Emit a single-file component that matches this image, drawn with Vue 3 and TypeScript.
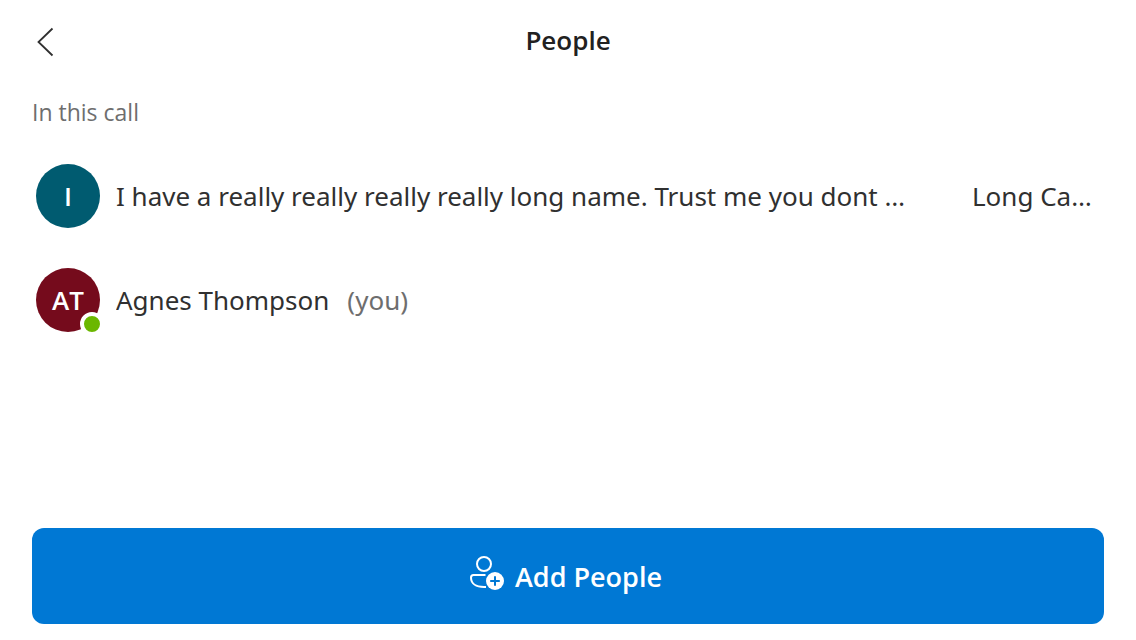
<script setup lang="ts">
interface Participant {
  initials: string
  name: string
  tone: string
  you?: boolean
  status?: string
  online?: boolean
}

const people: Participant[] = [
  { initials: 'I', name: 'I have a really really really really long name. Trust me you dont want to know it', tone: 'teal', status: 'Long Calling State' },
  { initials: 'AT', name: 'Agnes Thompson', tone: 'wine', you: true, online: true },
]
</script>

<template>
  <main class="pane">
    <header class="top">
      <button class="back" type="button" aria-label="Back">
        <svg width="18" height="30" viewBox="0 0 18 30" fill="none" stroke="#303030" stroke-width="1.8">
          <path d="M16.500 1.500 2.500 15 16.500 28.500" />
        </svg>
      </button>
      <h1>People</h1>
    </header>
    <h2>In this call</h2>
    <ul class="list">
      <li v-for="p in people" :key="p.name" class="row">
        <span class="avatar" :class="p.tone">{{ p.initials }}<i v-if="p.online" class="presence"></i></span>
        <span class="name">{{ p.name }}</span>
        <span v-if="p.you" class="you">(you)</span>
        <span v-if="p.status" class="status">{{ p.status }}</span>
      </li>
    </ul>
    <button class="add" type="button">
      <svg width="36" height="42" viewBox="0 0 36 42" fill="none" stroke="#fff" stroke-width="2">
        <circle cx="15" cy="9" r="7" />
        <path d="M16.500 20H4.500A2.500 2.500 0 0 0 2 22.500C2 28.500 7 32 15 32H17" />
        <circle cx="26" cy="26" r="9" fill="#fff" stroke="none" />
        <path d="M26 21.200v9.600M21.200 26h9.600" stroke="#0078d4" />
      </svg>
      <span>Add People</span>
    </button>
  </main>
</template>

<style>
body { background: #fff; }
</style>

<style scoped>
.pane {
  box-sizing: border-box;
  min-height: 100vh;
  padding: 16px 32px;
  display: flex;
  flex-direction: column;
  font-family: "Open Sans", "Noto Sans", sans-serif;
  color: #303030;
}
button { border: 0; padding: 0; font: inherit; cursor: pointer; }
.top {
  display: grid;
  grid-template-columns: 48px 1fr 48px;
  align-items: center;
  height: 48px;
}
.back {
  background: none;
  height: 48px;
  padding: 4px 0 0 4px;
  display: flex;
  align-items: center;
}
h1 { margin: 0; font-size: 26px; font-weight: 600; text-align: center; color: #212121; }
h2 { margin: 32px 0 0; font-size: 23px; line-height: 32px; font-weight: 400; color: #6e6e6e; }
.list { list-style: none; margin: 16px 0 0; padding: 0; }
.row {
  display: flex;
  align-items: center;
  height: 104px;
  padding: 0 8px 0 4px;
  font-family: "Noto Sans", "Open Sans", sans-serif;
  font-size: 26px;
}
.avatar {
  position: relative;
  flex: none;
  width: 64px;
  height: 64px;
  margin-right: 16px;
  border-radius: 50%;
  display: grid;
  place-items: center;
  color: #fff;
  font-family: "Open Sans", "Noto Sans", sans-serif;
  font-weight: 600;
}
.teal { background: #005b70; }
.wine { background: #750b1c; }
.presence {
  position: absolute;
  right: -4px;
  bottom: -4px;
  width: 16px;
  height: 16px;
  border: 4px solid #fff;
  border-radius: 50%;
  background: #6bb700;
}
.name, .status { overflow: hidden; white-space: nowrap; text-overflow: ellipsis; }
.you { margin-left: 18px; color: #6e6e6e; }
.status { flex: none; width: 124px; margin-left: 56px; }
.add {
  margin-top: auto;
  height: 96px;
  padding-right: 5px;
  border-radius: 12px;
  background: #0078d4;
  color: #fff;
  font-size: 27px;
  font-weight: 600;
  display: flex;
  align-items: center;
  justify-content: center;
  gap: 10px;
}
</style>
